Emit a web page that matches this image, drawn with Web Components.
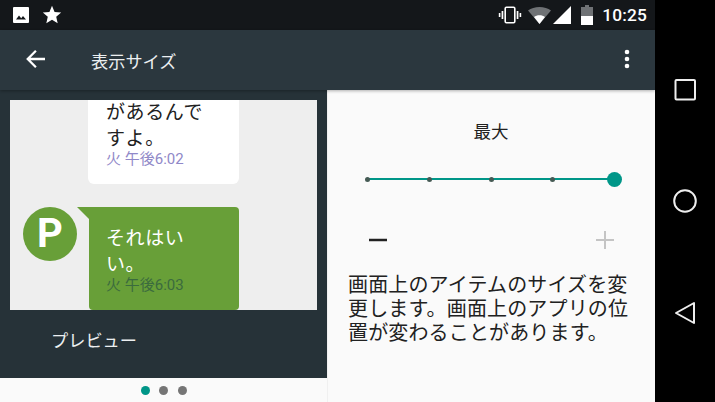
<!DOCTYPE html>
<html lang="ja">
<head>
<meta charset="utf-8">
<title>表示サイズ</title>
<style>
  html,body{margin:0;padding:0;background:#000;}
  body{width:715px;height:402px;overflow:hidden;font-family:Roboto,"Noto Sans CJK JP",sans-serif;}
</style>
</head>
<body>
<display-size-screen>
  <status-bar slot="status"></status-bar>
  <app-toolbar slot="toolbar">表示サイズ</app-toolbar>
  <preview-pane slot="preview" label="プレビュー">
    <chat-bubble kind="in" time="火 午後6:02">があるんで<br>すよ。</chat-bubble>
    <chat-bubble kind="out" time="火 午後6:03" avatar="P">それはい<br>い。</chat-bubble>
  </preview-pane>
  <page-dots slot="dots" count="3" active="0"></page-dots>
  <size-panel slot="panel" label="最大">画面上のアイテムのサイズを変更します。画面上のアプリの位置が変わることがあります。</size-panel>
  <nav-bar slot="nav"></nav-bar>
</display-size-screen>

<script>
(function(customElements){
  'use strict';

  class DisplaySizeScreen extends HTMLElement{
    constructor(){
      super();
      this.attachShadow({mode:'open'}).innerHTML=`<style>
        :host{display:flex;width:715px;height:402px;}
        .main{width:655px;display:flex;flex-direction:column;}
        .content{flex:1;display:flex;min-height:0;background:#fafafa;}
        .left{width:327px;display:flex;flex-direction:column;}
        .right{flex:1;display:flex;min-width:0;}
      </style>
      <div class="main">
        <slot name="status"></slot>
        <slot name="toolbar"></slot>
        <div class="content">
          <div class="left"><slot name="preview"></slot><slot name="dots"></slot></div>
          <div class="right"><slot name="panel"></slot></div>
        </div>
      </div>
      <slot name="nav"></slot>`;
    }
  }

  class StatusBar extends HTMLElement{
    constructor(){
      super();
      this.attachShadow({mode:'open'}).innerHTML=`<style>
        :host{display:flex;align-items:center;height:30px;background:#14171a;color:#fff;padding:0 8px 0 12px;box-sizing:border-box;}
        svg{display:block;flex:none;}
        .left{display:flex;align-items:center;gap:11px;}
        .right{margin-left:auto;display:flex;align-items:center;}
        .time{font:500 17.3px Roboto,sans-serif;letter-spacing:.2px;margin-left:9px;}
      </style>
      <div class="left">
        <svg width="18" height="18" viewBox="0 0 18 18"><path fill="#fff" d="M2 1h14a1 1 0 0 1 1 1v14a1 1 0 0 1-1 1H2a1 1 0 0 1-1-1V2a1 1 0 0 1 1-1z"/><path fill="#14171a" d="M4 13.5l3-4 2.2 2.7 1.8-2.2 3 3.5z"/></svg>
        <svg width="22" height="22" viewBox="0 0 24 24"><path fill="#fff" d="M12 17.3l6.2 3.7-1.6-7L22 9.2l-7.2-.6L12 2 9.2 8.6 2 9.2 7.4 14l-1.6 7z"/></svg>
      </div>
      <div class="right">
        <svg width="24" height="18" viewBox="0 0 24 18" style="margin-right:6px"><rect x="7.2" y="1.2" width="9.6" height="15.6" rx="1.2" fill="none" stroke="#fff" stroke-width="1.6"/><path fill="#fff" d="M3.6 5h1.7v8H3.6zM18.7 5h1.7v8h-1.7zM.8 7h1.6v4H.8zM21.6 7h1.6v4h-1.6z"/></svg>
        <svg width="23" height="17" viewBox="0 0 23 17" style="margin-right:2px"><path fill="#6f7275" d="M0 3.5C3 1.3 7 0 11.5 0S20 1.300 23 3.500L11.500 17z"/><path fill="#fff" d="M6 10c1.500-1.100 3.400-1.700 5.500-1.700S15.500 8.900 17 10l-5.500 7z"/></svg>
        <svg width="18" height="18" viewBox="0 0 18 18" style="margin-right:10px"><path fill="#fff" d="M18 0v18H0z"/></svg>
        <svg width="12" height="20" viewBox="0 0 12 20"><path fill="#6f7275" d="M4 0h4v2h4v9H0V2h4z"/><path fill="#fff" d="M0 11h12v9H0z"/></svg>
        <span class="time">10:25</span>
      </div>`;
    }
  }

  class AppToolbar extends HTMLElement{
    constructor(){
      super();
      this.attachShadow({mode:'open'}).innerHTML=`<style>
        :host{display:flex;align-items:center;height:60px;background:#2b373e;color:#eceff1;box-sizing:border-box;padding:0 25px 0 25px;box-shadow:0 1px 3px rgba(0,0,0,.3);position:relative;}
        .title{margin-left:46px;font:17.2px "Noto Sans CJK JP",sans-serif;}
        svg{display:block;flex:none;}
        .back{margin-bottom:2px;}
        .more{margin-left:auto;margin-bottom:3px;}
      </style>
      <svg class="back" width="20" height="22" viewBox="0 0 22 24"><path fill="none" stroke="#fff" stroke-width="2.500" d="M22 12H3M12 3l-9 9 9 9"/></svg>
      <span class="title"><slot></slot></span>
      <svg class="more" width="6" height="20" viewBox="0 0 6 20"><circle cx="3" cy="3" r="2.300" fill="#fff"/><circle cx="3" cy="10" r="2.300" fill="#fff"/><circle cx="3" cy="17" r="2.300" fill="#fff"/></svg>`;
    }
  }

  class PreviewPane extends HTMLElement{
    constructor(){
      super();
      this.attachShadow({mode:'open'}).innerHTML=`<style>
        :host{display:flex;flex-direction:column;height:288px;background:#263238;padding:10px 10px 0;box-sizing:border-box;}
        .canvas{height:210px;background:#eeeeee;overflow:hidden;display:flex;flex-direction:column;justify-content:flex-end;gap:23px;}
        .label{margin-left:41px;margin-top:16px;font:17.2px/28px "Noto Sans CJK JP",sans-serif;color:#eceff1;}
      </style>
      <div class="canvas"><slot></slot></div>
      <div class="label"></div>`;
      this.shadowRoot.querySelector('.label').textContent=this.getAttribute('label');
    }
  }

  class ChatBubble extends HTMLElement{
    constructor(){
      super();
      const kind=this.getAttribute('kind');
      const avatar=this.getAttribute('avatar');
      this.attachShadow({mode:'open'}).innerHTML=`<style>
        :host{display:flex;flex:none;position:relative;padding-left:${kind=='out'?79:78}px;}
        .bubble{width:${kind=='out'?150:151}px;box-sizing:border-box;padding:${kind=='out'?'17px 17px 15px':'0 18px 15px'};border-radius:${kind=='out'?'0 4px 4px 4px':'0 0 6px 6px'};background:${kind=='out'?'#689f38':'#fff'};color:${kind=='out'?'#fff':'#212121'};position:relative;}
        .text{font:19px/26px "Noto Sans CJK JP",sans-serif;letter-spacing:.6px;}
        .time{font:15px/20px Roboto,"Noto Sans CJK JP",sans-serif;color:${kind=='out'?'#3b6b3e':'#9088c8'};margin-top:-1px;}
        .tail{position:absolute;left:-12px;top:0;width:0;height:0;border-top:12px solid #689f38;border-left:12px solid transparent;}
        .avatar{position:absolute;left:13px;top:0;width:54px;height:54px;border-radius:50%;background:#689f38;color:#fff;font:700 40px/54px Roboto,sans-serif;text-align:center;}
      </style>
      <div class="bubble">${kind=='out'?'<div class="tail"></div>':''}<div class="text"><slot></slot></div><div class="time"></div></div>
      ${avatar?`<div class="avatar">${avatar}</div>`:''}`;
      this.shadowRoot.querySelector('.time').textContent=this.getAttribute('time');
    }
  }

  class PageDots extends HTMLElement{
    constructor(){
      super();
      const count=+this.getAttribute('count'), active=+this.getAttribute('active');
      let dots='';
      for(let i=0;i<count;i++){
        dots+=`<i${i==active?' class="on"':''}></i>`;
      }
      this.attachShadow({mode:'open'}).innerHTML=`<style>
        :host{display:flex;flex:1;justify-content:center;align-items:center;gap:9.500px;background:#fafafa;}
        i{width:9px;height:9px;border-radius:50%;background:#757575;}
        i.on{background:#009688;}
      </style>${dots}`;
    }
  }

  class SizePanel extends HTMLElement{
    constructor(){
      super();
      this.attachShadow({mode:'open'}).innerHTML=`<style>
        :host{display:flex;flex:1;flex-direction:column;box-sizing:border-box;padding:0 24px 0 21px;color:#212121;box-shadow:inset 1px 0 0 #f0f0f0;}
        .label{margin-top:28px;text-align:center;font:17.500px/26px "Noto Sans CJK JP",sans-serif;padding-left:3px;}
        size-seekbar{margin-top:27px;}
        .steps{display:flex;justify-content:space-between;align-items:center;margin-top:41px;padding:0 17px 0 21px;height:24px;}
        svg{display:block;}
        .desc{margin-top:20px;font:20px/24px "Noto Sans CJK JP",sans-serif;letter-spacing:.15px;}
      </style>
      <div class="label"></div>
      <size-seekbar steps="5" value="4"></size-seekbar>
      <div class="steps">
        <svg width="18" height="18" viewBox="0 0 18 18"><path fill="#212121" d="M0 7.750h18v2.500H0z"/></svg>
        <svg width="18" height="18" viewBox="0 0 18 18"><path fill="#c4c4c4" d="M0 8h8V0h2v8h8v2h-8v8H8v-8H0z"/></svg>
      </div>
      <div class="desc"><slot></slot></div>`;
      this.shadowRoot.querySelector('.label').textContent=this.getAttribute('label');
    }
  }

  class SizeSeekbar extends HTMLElement{
    constructor(){
      super();
      const steps=+this.getAttribute('steps'), value=+this.getAttribute('value');
      let ticks='';
      for(let i=0;i<steps;i++){
        ticks+=i==value?'<i class="thumb"></i>':'<i></i>';
      }
      this.attachShadow({mode:'open'}).innerHTML=`<style>
        :host{display:block;position:relative;height:16px;margin-left:17px;}
        .track{position:absolute;left:2px;width:247px;top:7px;height:2px;background:#009688;}
        .ticks{position:relative;display:flex;gap:56.750px;align-items:center;height:16px;}
        i{display:block;flex:none;width:5px;height:5px;border-radius:50%;background:#455a54;}
        i.thumb{width:15px;height:15px;background:#009688;margin:0 -5px;}
      </style>
      <div class="track"></div>
      <div class="ticks">${ticks}</div>`;
    }
  }

  class NavBar extends HTMLElement{
    constructor(){
      super();
      this.attachShadow({mode:'open'}).innerHTML=`<style>
        :host{display:flex;flex-direction:column;align-items:center;width:60px;height:402px;background:#000;padding-top:79px;box-sizing:border-box;gap:88px;}
        svg{display:block;flex:none;}
      </style>
      <svg width="22" height="22" viewBox="0 0 22 22"><rect x="1.500" y="1" width="19.500" height="19.500" rx="1" fill="none" stroke="#eee" stroke-width="2"/></svg>
      <svg width="24" height="24" viewBox="0 0 24 24"><circle cx="12" cy="12" r="10.800" fill="none" stroke="#eee" stroke-width="2"/></svg>
      <svg width="22" height="24" viewBox="0 0 22 24"><path d="M20 2v20L2 12z" fill="none" stroke="#eee" stroke-width="2" stroke-linejoin="round"/></svg>`;
    }
  }

  customElements.define('display-size-screen',DisplaySizeScreen);
  customElements.define('status-bar',StatusBar);
  customElements.define('app-toolbar',AppToolbar);
  customElements.define('preview-pane',PreviewPane);
  customElements.define('chat-bubble',ChatBubble);
  customElements.define('page-dots',PageDots);
  customElements.define('size-panel',SizePanel);
  customElements.define('size-seekbar',SizeSeekbar);
  customElements.define('nav-bar',NavBar);
})(window.customElements);
</script>
</body>
</html>
